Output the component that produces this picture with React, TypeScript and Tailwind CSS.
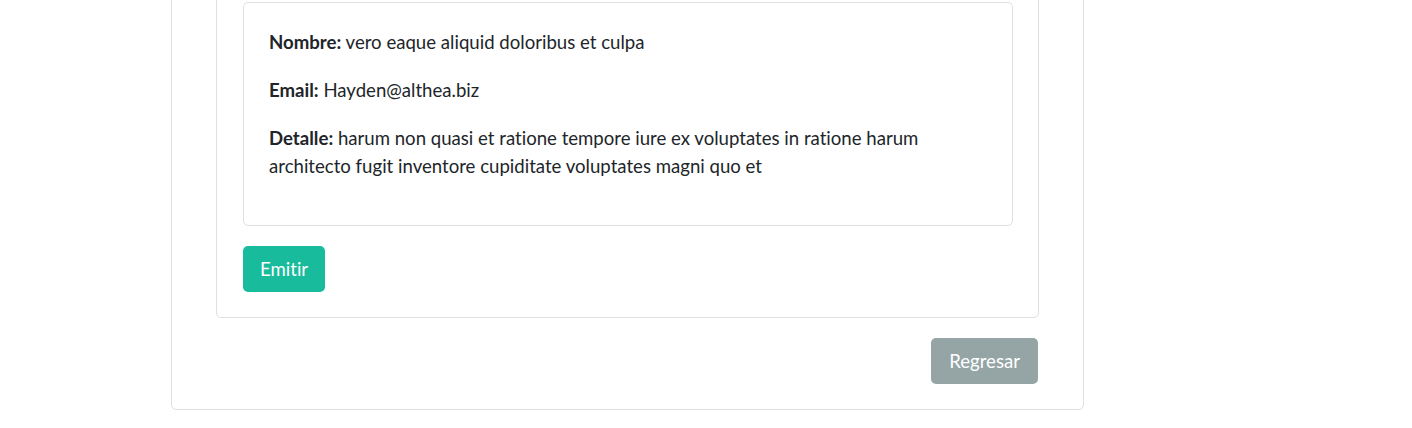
import React from 'react';

const ticket = {
  nombre: 'vero eaque aliquid doloribus et culpa',
  email: 'Hayden@althea.biz',
  detalle:
    'harum non quasi et ratione tempore iure ex voluptates in ratione harum architecto fugit inventore cupiditate voluptates magni quo et',
};

const App = () => {
  return (
    <div
      className="min-h-screen bg-white overflow-hidden text-[#212529] [font-variant-ligatures:none]"
      style={{ fontFamily: 'Lato, "Open Sans", sans-serif' }}
    >
      <div className="ml-[171px] w-[913px] -mt-[50px] border border-[#dfdfdf] rounded-[5px] bg-white pt-[25px] pb-[25px] px-[44px]">
        <div className="border border-[#dfdfdf] rounded-[5px] px-[26px] pr-[25px] pt-[25px] pb-[25px]">
          <div className="border border-[#dfdfdf] rounded-[5px] p-[25px] text-[18.6px] leading-[28px]">
            <p className="mb-[20px]">
              <span className="font-bold">Nombre:</span> {ticket.nombre}
            </p>
            <p className="mb-[20px]">
              <span className="font-bold">Email:</span> {ticket.email}
            </p>
            <p className="mb-[20px] pr-[60px]">
              <span className="font-bold">Detalle:</span> {ticket.detalle}
            </p>
          </div>
          <button className="mt-[20px] h-[46px] px-[17px] rounded-[5px] bg-[#18bc9c] text-white text-[18.6px] leading-[28px]">
            Emitir
          </button>
        </div>
        <div className="flex justify-end mt-[20px]">
          <button className="h-[46px] px-[18px] rounded-[5px] bg-[#95a5a6] text-white text-[18.6px] leading-[28px] mr-px">
            Regresar
          </button>
        </div>
      </div>
    </div>
  );
};

export default App;
